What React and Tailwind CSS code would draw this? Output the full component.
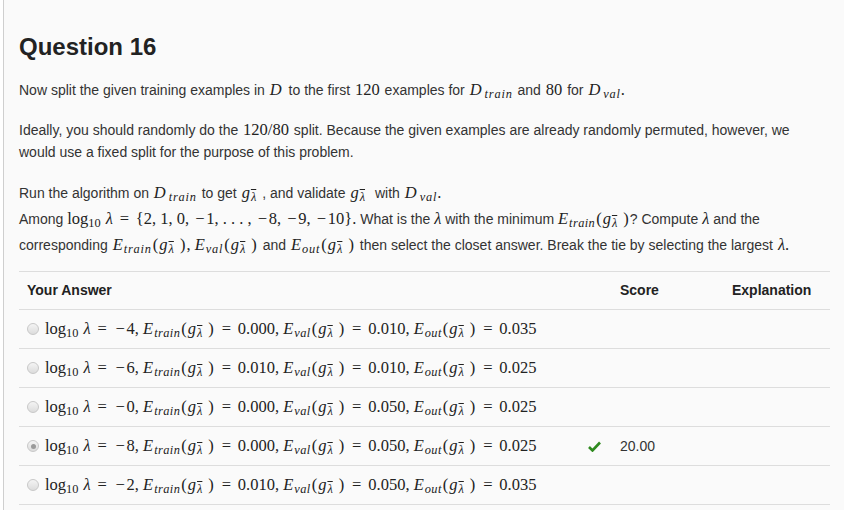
import React from 'react';

const Math = ({ children, inline }) => (
  <span className={`font-['Liberation_Serif',serif] text-[16.5px] text-[#222] whitespace-nowrap ${inline ? 'mx-[1px]' : ''}`}>{children}</span>
);

const Sub = ({ children, italic, wide }) => (
  <sub className={`text-[0.75em] ${italic ? (wide ? 'italic tracking-[0.8px] ml-[1px]' : 'italic tracking-[0.4px] ml-[1px]') : ''}`}>{children}</sub>
);

const G = () => (
  <>
    <i>g</i>
    <sub className="text-[0.75em] italic ml-[1px] mr-[5px]"><span className="overline">λ</span></sub>
  </>
);

const E = ({ s, wide }) => (
  <>
    <i>E</i>
    <Sub italic wide={wide}>{s}</Sub>
  </>
);

const D = ({ s }) => (
  <>
    <i className="pr-[2px]">D</i>
    {s && <Sub italic wide>{s}</Sub>}
  </>
);

const Log = () => (
  <>
    log<Sub>10</Sub>
    <span className="ml-[5px]"><i>λ</i></span>
  </>
);

const Eq = () => <span className="inline-block w-[13px] text-center mx-[5px]">=</span>;
const Minus = () => <span className="inline-block w-[13px] text-center">−</span>;
const P = ({ children }) => <span className="mx-[1px]">{children}</span>;

const answers = [
  { l: '4', tr: '0.000', va: '0.010', out: '0.035' },
  { l: '6', tr: '0.010', va: '0.010', out: '0.025' },
  { l: '0', tr: '0.000', va: '0.050', out: '0.025' },
  { l: '8', tr: '0.000', va: '0.050', out: '0.025', picked: true },
  { l: '2', tr: '0.010', va: '0.050', out: '0.035' },
];

function Radio({ checked }) {
  return (
    <span className="w-[12px] h-[12px] rounded-full border border-[#c8c8c8] bg-gradient-to-b from-[#f4f4f4] to-[#dcdcdc] flex items-center justify-center shrink-0">
      {checked && <span className="w-[5px] h-[5px] rounded-full bg-[#9a9a9a]" />}
    </span>
  );
}

export default function App() {
  return (
    <div className="min-h-screen bg-[#fafafa] ml-[3px] border-l border-[#cfcfcf] pl-[15px] pr-[14px] pt-[34px] font-['Liberation_Sans',Arial,sans-serif] text-[#333] text-[14px]">
      <h1 className="text-[24px] font-bold leading-[26px] text-[#222]">Question 16</h1>

      <p className="mt-[17px] leading-[26px]">
        Now split the given training examples in <Math inline><D /></Math> to the first <Math inline>120</Math> examples for{' '}
        <Math inline><D s="train" /></Math> and <Math inline>80</Math> for <Math inline><D s="val" />.</Math>
      </p>

      <p className="mt-[16px] leading-[22px]">
        Ideally, you should randomly do the <Math inline>120/80</Math> split. Because the given examples are already randomly permuted, however, we<br />
        would use a fixed split for the purpose of this problem.
      </p>

      <p className="mt-[17px] leading-[26px]">
        Run the algorithm on <Math inline><D s="train" /></Math> to get <Math inline><G /></Math>, and validate <Math inline><G /></Math> with{' '}
        <Math inline><D s="val" />.</Math>
        <br />
        Among <Math><Log /><Eq />{'{2, 1, 0, '}<Minus />{'1, . . . , '}<Minus />{'8, '}<Minus />{'9, '}<Minus />{'10}.'}</Math> What is the <Math><i>λ</i></Math> with the minimum{' '}
        <Math><E s="train" /><P>(</P><G /><P>)</P></Math>? Compute <Math><i>λ</i></Math> and the
        <br />
        corresponding <Math inline><E s="train" wide /><P>(</P><G /><P>)</P>, <E s="val" wide /><P>(</P><G /><P>)</P></Math> and <Math inline><E s="out" wide /><P>(</P><G /><P>)</P></Math> then select the
        closet answer. Break the tie by selecting the largest <Math inline><i>λ</i>.</Math>
      </p>

      <div className="mt-[13px] w-[811px] grid grid-cols-[569px_24px_112px_1fr] border-t border-[#dddddd]">
        <div className="col-span-2 h-[38px] flex items-center px-2 font-bold text-[#222] border-b border-[#dddddd]">Your Answer</div>
        <div className="h-[38px] flex items-center px-2 font-bold text-[#222] border-b border-[#dddddd]">Score</div>
        <div className="h-[38px] flex items-center px-2 font-bold text-[#222] border-b border-[#dddddd]">Explanation</div>
        {answers.map((a, i) => (
          <React.Fragment key={i}>
            <div className="h-[39px] flex items-center gap-[6px] pl-2 border-b border-[#dddddd]">
              <Radio checked={a.picked} />
              <Math>
                <Log /><Eq /><Minus />{a.l}, <E s="train" /><P>(</P><G /><P>)</P><Eq />{a.tr}, <E s="val" /><P>(</P><G /><P>)</P><Eq />{a.va}, <E s="out" /><P>(</P><G /><P>)</P><Eq />{a.out}
              </Math>
            </div>
            <div className="h-[39px] flex items-center border-b border-[#dddddd]">
              {a.picked && (
                <svg width="13" height="11" viewBox="0 0 13 11">
                  <path d="M1 6 L4.5 9.5 L12 1.5" fill="none" stroke="#2f8a1f" strokeWidth="2.6" strokeLinejoin="miter" />
                </svg>
              )}
            </div>
            <div className="h-[39px] flex items-center px-2 border-b border-[#dddddd]">{a.picked ? '20.00' : ''}</div>
            <div className="h-[39px] border-b border-[#dddddd]" />
          </React.Fragment>
        ))}
      </div>
    </div>
  );
}
